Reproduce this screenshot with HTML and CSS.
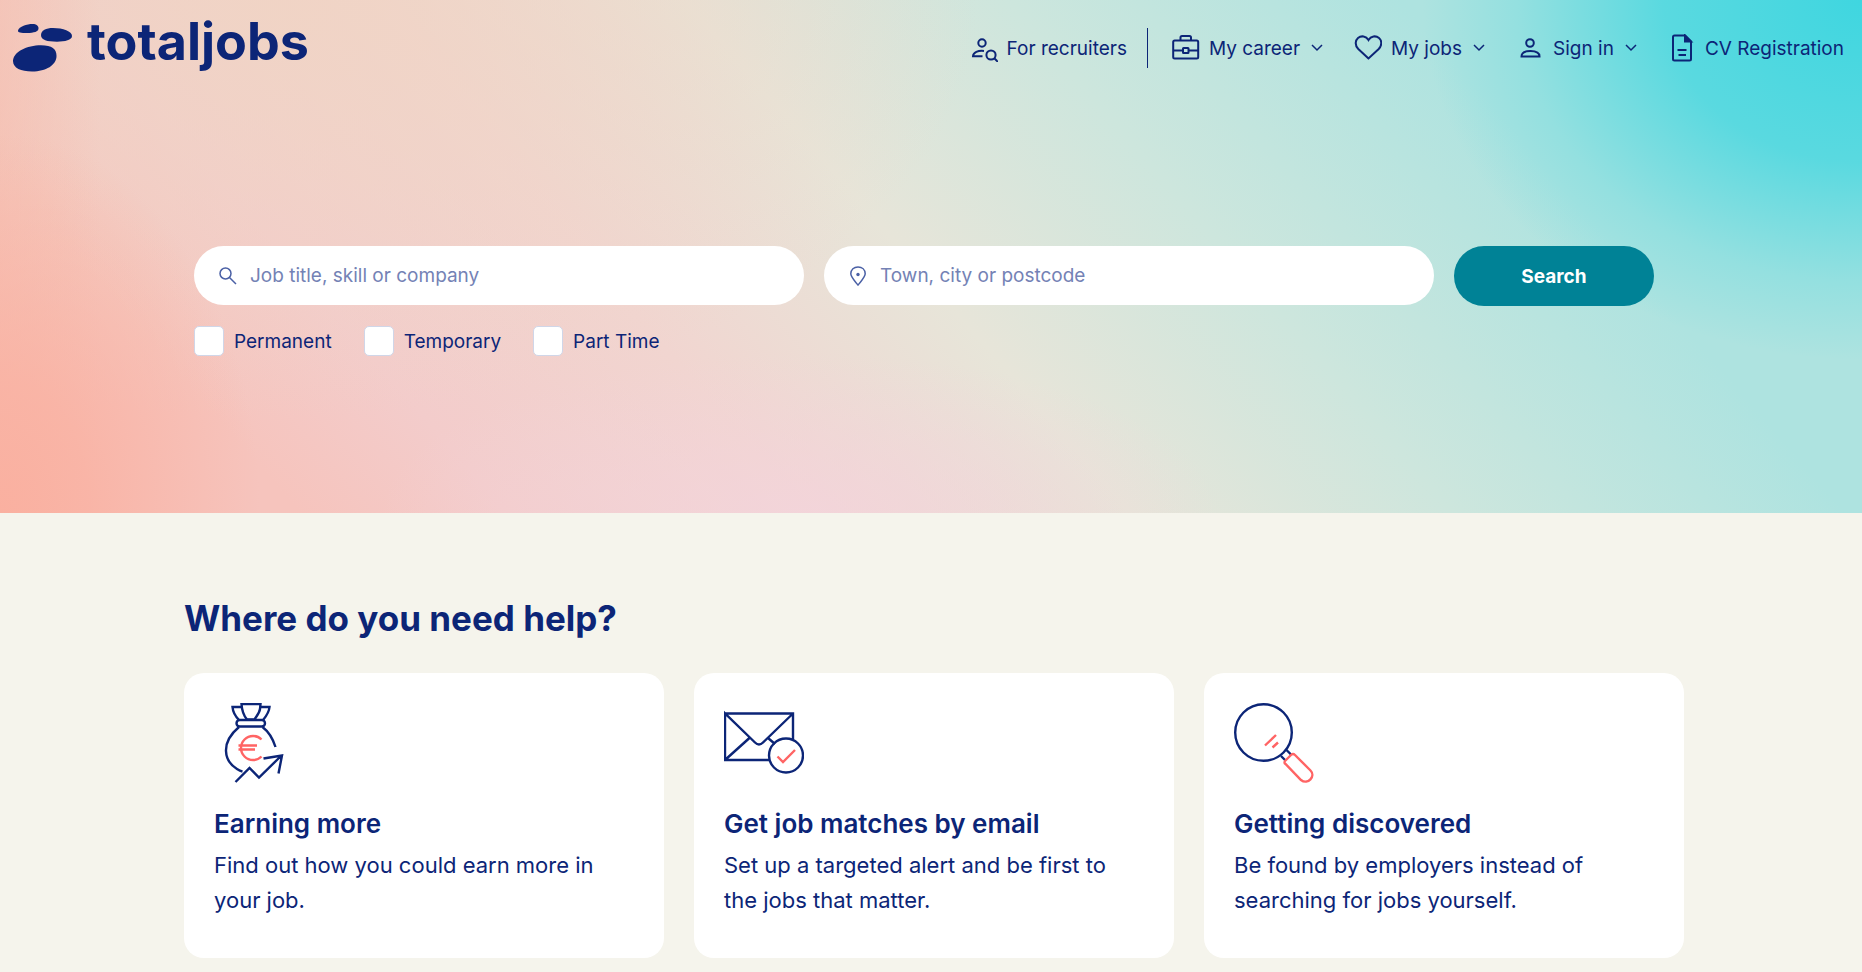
FILE: index.html
```html
<!DOCTYPE html>
<html lang="en">
<head>
    <meta charset="utf-8">
    <title>totaljobs</title>
    <link rel="stylesheet" href="styles.css">
</head>
<body>
    <div class="hero">
        <header class="header">
            <a href="#" class="logo">
                <svg class="logo-mark" width="60" height="48" viewBox="0 0 60 48">
                    <path d="M5 6.5C6 2.500 14 0 19.500 0C23.500 0 25.500 2 25.500 4.500C25.500 7.500 21 9 14 9C8 9 4.500 8.500 5 6.500Z"/>
                    <path d="M28 11C28 6.500 33 4 40 4C50 4 59 7.500 59 12C59 16 52 17.700 44 17.700C34 17.700 28 16 28 11Z"/>
                    <path d="M0 37C0 28 14 21.300 28 21.300C39 21.300 43.500 25 43.500 32C43.500 41 33 47.500 19 47.500C8 47.500 0 44 0 37Z"/>
                </svg>
                <span class="logo-text">totaljobs</span>
            </a>
            <nav class="nav">
                <a href="#" class="nav-link">
                    <svg class="icon" width="28" height="28" viewBox="0 0 28 28">
                        <circle cx="12" cy="9" r="3.700"/>
                        <path d="M14 17C8 16.300 3.200 18.500 3 22.200H12.500"/>
                        <circle cx="21" cy="21" r="4.600"/>
                        <path d="M24.300 24.300L28 28"/>
                    </svg>
                    For recruiters
                </a>
                <span class="divider"></span>
                <a href="#" class="nav-link">
                    <svg class="icon" width="28" height="28" viewBox="0 0 28 28">
                        <rect x="1.200" y="6.500" width="25" height="18" rx="1.500"/>
                        <path d="M8.500 6.500V3.500Q8.500 2 10 2H17.500Q19 2 19 3.500V6.500M1.200 16.500H11M16.500 16.500H26"/>
                        <rect x="11" y="14" width="5.500" height="5" rx="0.500"/>
                    </svg>
                    My career
                    <svg class="chevron" width="12" height="8" viewBox="0 0 12 8"><path d="M1 1L6 6L11 1"/></svg>
                </a>
                <a href="#" class="nav-link">
                    <svg class="icon" width="28" height="28" viewBox="0 0 28 28">
                        <path d="M14.500 24.500L4.300 15C0.800 11.500 1 6.500 4 4C7.300 1.300 12 2 14.500 6C17 2 21.700 1.300 25 4C28 6.500 28.200 11.500 24.700 15Z"/>
                    </svg>
                    My jobs
                    <svg class="chevron" width="12" height="8" viewBox="0 0 12 8"><path d="M1 1L6 6L11 1"/></svg>
                </a>
                <a href="#" class="nav-link">
                    <svg class="icon" width="28" height="28" viewBox="0 0 28 28">
                        <circle cx="14" cy="9" r="3.800"/>
                        <path d="M5.500 22.500C5.500 18.500 9 17 14.500 17C20 17 23.500 18.500 23.500 22.500Z"/>
                    </svg>
                    Sign in
                    <svg class="chevron" width="12" height="8" viewBox="0 0 12 8"><path d="M1 1L6 6L11 1"/></svg>
                </a>
                <a href="#" class="nav-link">
                    <svg class="icon" width="28" height="28" viewBox="0 0 28 28">
                        <path d="M17 1.500H6.500Q5 1.500 5 3V25Q5 26.500 6.500 26.500H21.500Q23 26.500 23 25V7.500ZM9.500 16H18.500M10.500 21H18"/>
                        <path class="fill" d="M17 1.500V7.500H23Z"/>
                    </svg>
                    CV Registration
                </a>
            </nav>
        </header>

        <form class="search">
            <div class="search-row">
                <div class="field">
                    <svg class="field-icon" width="20" height="20" viewBox="0 0 20 20">
                        <circle cx="7.500" cy="7.500" r="5.500"/>
                        <path d="M11.500 11.500L18 18"/>
                    </svg>
                    <input type="text" name="what" aria-label="Job title, skill or company" placeholder="Job title, skill or company">
                </div>
                <div class="field">
                    <svg class="field-icon" width="20" height="20" viewBox="0 0 20 20">
                        <path d="M10 19C6 14 2.800 11 2.800 7.800C2.800 3.500 6 1 10 1C14 1 17.200 3.500 17.200 7.800C17.200 11 14 14 10 19Z"/>
                        <circle class="dot" cx="10" cy="8.500" r="1.700"/>
                    </svg>
                    <input type="text" name="where" aria-label="Town, city or postcode" placeholder="Town, city or postcode">
                </div>
                <button type="submit">Search</button>
            </div>
            <div class="options">
                <label><input type="checkbox" name="permanent">Permanent</label>
                <label><input type="checkbox" name="temporary">Temporary</label>
                <label><input type="checkbox" name="parttime">Part Time</label>
            </div>
        </form>
    </div>

    <main class="help">
        <h2>Where do you need help?</h2>
        <div class="cards">
            <a href="#" class="card">
                <svg class="card-icon" width="80" height="80" viewBox="-6 0 80 80">
                    <path d="M21.500 1H40.500L40 6C39.500 10 36.500 13 34.500 16.500H27C24 13 22 9 21.500 1ZM21.500 4H12.500C13 10 16 14 19 17M40.500 4H49.500C49 10 45.500 14 43 17"/>
                    <rect x="16.500" y="17" width="28.500" height="6.500" rx="3.200"/>
                    <path d="M19 24C0 40 4 58 17 66Q20 68 22.500 68.500M42.500 24C49 29 53 36 55.500 44"/>
                    <path d="M15.500 79L29.500 65L39 74.500L61 53M43.500 55.500L62 52.500L58.500 70.500"/>
                    <path class="coral" d="M41.500 36.500A12 12 0 1 0 41.500 53.500M18.500 42.500H37M18.500 46.500H35"/>
                </svg>
                <h3>Earning more</h3>
                <p>Find out how you could earn more in your job.</p>
            </a>
            <a href="#" class="card">
                <svg class="card-icon" width="80" height="80" viewBox="0 0 80 80">
                    <path d="M1 10.500H69V36M45 57H1V10.500L31 39.500Q35 43.500 39 39.500L69 10.500M1 57L26 34.500M44 35L51 41"/>
                    <circle cx="62" cy="52.500" r="17"/>
                    <path class="coral" d="M53.500 53.500L59 59L71 47"/>
                </svg>
                <h3>Get job matches by email</h3>
                <p>Set up a targeted alert and be first to the jobs that matter.</p>
            </a>
            <a href="#" class="card">
                <svg class="card-icon" width="80" height="80" viewBox="0 0 80 80">
                    <circle cx="29.500" cy="29.500" r="28.300"/>
                    <path d="M47 53L51.500 57.500M52.500 47L57 51.500"/>
                    <path class="coral" d="M31 42.500L42 32M38.500 44.500L44 39.500M51.500 57.500L57 52Q59 50 61 52L76.500 67.500C82 73 74 82.500 67 77L51.500 61Q49.500 59.500 51.500 57.500Z"/>
                </svg>
                <h3>Getting discovered</h3>
                <p>Be found by employers instead of searching for jobs yourself.</p>
            </a>
        </div>
    </main>
</body>
</html>
```
FILE: styles.css
```css
* { box-sizing: border-box; }
body { margin: 0; font-family: Inter, "Liberation Sans", sans-serif; font-size: 19px; color: #0c2577; background: #f5f4ec; }
a { color: inherit; text-decoration: none; }
svg { flex: none; fill: none; stroke: #0c2577; stroke-width: 2; }

.hero {
    height: 513px;
    background:
        radial-gradient(ellipse 440px 360px at 100% 0, #3fd6e0 0%, rgba(63,214,224,0.76) 45%, rgba(63,214,224,0.24) 78%, rgba(63,214,224,0) 100%),
        radial-gradient(ellipse 260px 380px at 0 100%, #fab0a0 0%, rgba(250,176,160,0.75) 35%, rgba(250,176,160,0) 100%),
        linear-gradient(90deg, rgba(246,190,176,0.6) 0, rgba(246,190,176,0) 100px),
        radial-gradient(ellipse 700px 420px at 15% 0, rgba(240,212,196,0.9) 0%, rgba(240,212,196,0) 100%),
        radial-gradient(ellipse 420px 160px at 43% 100%, rgba(243,212,220,0.8) 0%, rgba(243,212,220,0) 100%),
        linear-gradient(49deg, #f6c4bd 0%, #f6c4bd 13%, #f3cccb 22%, #f1d5d0 35%, #e7e5d9 49%, #cde6dd 63%, #aee3e0 80%, #aee3e0 100%);
}

.header { display: flex; justify-content: space-between; align-items: center; height: 96px; padding: 0 18px 0 13px; }
.logo { display: flex; align-items: center; gap: 14px; }
.logo-mark { fill: #0c2577; stroke: none; }
.logo-text { margin-bottom: 12px; font-size: 52px; line-height: 60px; font-weight: bold; }
.nav { display: flex; align-items: center; }
.nav-link { display: flex; align-items: center; gap: 9px; margin-left: 31px; }
.nav-link:first-child { margin-left: 0; }
.divider { width: 1px; height: 40px; margin-left: 20px; background: #0c2577; }
.divider + .nav-link { margin-left: 24px; }
.icon .fill { fill: #0c2577; }
.chevron { margin-left: 2px; stroke-width: 1.5; }

.search { padding: 150px 208px 0 194px; }
.search-row { display: flex; gap: 20px; }
.field { display: flex; align-items: center; flex: 1; gap: 12px; height: 59px; padding: 0 24px; border-radius: 30px; background: #fff; }
.field-icon { stroke: #4a60a5; stroke-width: 1.5; }
.field-icon .dot { fill: #4a60a5; stroke: none; }
.field input { flex: 1; min-width: 0; padding: 0; border: 0; outline: 0; background: none; font: inherit; color: inherit; }
.field input::placeholder { color: #7482b5; opacity: 1; }
button { width: 200px; height: 60px; border: 0; border-radius: 30px; background: #008296; color: #fff; font: inherit; font-weight: bold; }
.options { display: flex; gap: 32px; margin-top: 20px; }
.options label { display: flex; align-items: center; gap: 10px; }
.options input { appearance: none; width: 30px; height: 30px; margin: 0; border: 1px solid #d0d6e8; border-radius: 5px; background: #fff; }

.help { padding: 80px 178px 14px 184px; }
h2 { margin: 0 0 30px; font-size: 35px; line-height: 50px; font-weight: bold; }
.cards { display: grid; grid-template-columns: repeat(3, 1fr); gap: 30px; }
.card { padding: 30px 30px 40px; border-radius: 20px; background: #fff; }
.card-icon { display: block; stroke-width: 2.4; }
.coral { stroke: #ff6464; }
h3 { margin: 22px 0 5px; font-size: 26px; line-height: 38px; font-weight: 600; }
p { margin: 0; font-size: 22px; line-height: 35px; }
```
